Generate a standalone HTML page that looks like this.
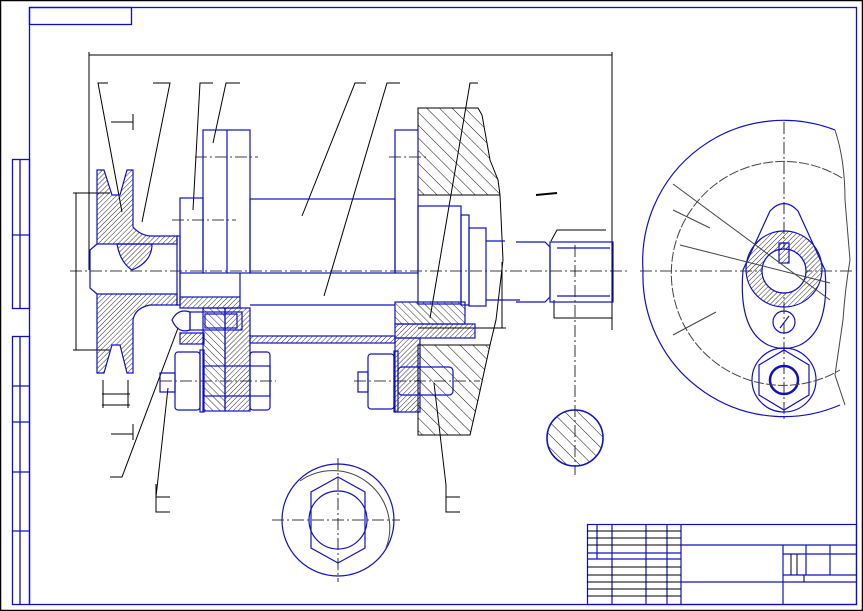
<!DOCTYPE html>
<html><head><meta charset="utf-8"><style>
html,body{margin:0;padding:0;background:#fff;}
svg{display:block}
</style></head><body>
<svg width="863" height="611" viewBox="0 0 863 611" xmlns="http://www.w3.org/2000/svg" fill="none" stroke-linecap="butt">
<defs>
<pattern id="h1" width="3.5" height="3.5" patternUnits="userSpaceOnUse" patternTransform="rotate(45)"><line x1="0" y1="0" x2="0" y2="4" stroke="#111" stroke-width="0.9"/></pattern>
<pattern id="h2" width="5" height="5" patternUnits="userSpaceOnUse" patternTransform="rotate(-45)"><line x1="0" y1="0" x2="0" y2="5" stroke="#111" stroke-width="0.9"/></pattern>
<pattern id="h3" width="9" height="9" patternUnits="userSpaceOnUse" patternTransform="rotate(-45)"><line x1="0" y1="0" x2="0" y2="9" stroke="#111" stroke-width="1"/></pattern>
</defs>
<rect x="0.5" y="0.5" width="862" height="610" stroke="#000" stroke-width="1.5"/>
<g stroke="#1010c0" stroke-width="1.3">
<rect x="29.5" y="7.5" width="827" height="597"/>
<rect x="29.5" y="7.5" width="102" height="17"/>
<rect x="12.5" y="159.5" width="17" height="149"/>
<line x1="20" y1="159" x2="20" y2="308"/>
<line x1="12" y1="235" x2="29" y2="235"/>
<rect x="12.5" y="336.5" width="17" height="268"/>
<line x1="20" y1="336" x2="20" y2="604"/>
<line x1="12" y1="386" x2="29" y2="386"/><line x1="12" y1="422" x2="29" y2="422"/><line x1="12" y1="472" x2="29" y2="472"/><line x1="12" y1="531" x2="29" y2="531"/>
</g>
<g stroke="#1010c0" stroke-width="1.2">
<rect x="587.5" y="524.5" width="269" height="80"/>
<line x1="681" y1="524" x2="681" y2="604"/>
<line x1="681" y1="545" x2="856" y2="545"/>
<line x1="681" y1="582" x2="856" y2="582"/>
<line x1="783" y1="545" x2="783" y2="604"/>
<line x1="783" y1="575" x2="856" y2="575"/>
<line x1="806" y1="545" x2="806" y2="575"/>
<line x1="830" y1="545" x2="830" y2="575"/>
<line x1="783" y1="554" x2="856" y2="554"/>
<line x1="597" y1="524" x2="597" y2="559"/>
<line x1="612" y1="524" x2="612" y2="604"/><line x1="646" y1="524" x2="646" y2="604"/><line x1="667" y1="524" x2="667" y2="604"/>
<line x1="587" y1="553" x2="681" y2="553"/><line x1="587" y1="559" x2="681" y2="559"/>
</g>
<g stroke="#000" stroke-width="1">
<line x1="587" y1="531" x2="681" y2="531"/><line x1="587" y1="538" x2="681" y2="538"/><line x1="587" y1="545" x2="681" y2="545"/>
<line x1="587" y1="567" x2="681" y2="567"/><line x1="587" y1="575" x2="681" y2="575"/><line x1="587" y1="582" x2="681" y2="582"/><line x1="587" y1="589" x2="681" y2="589"/><line x1="587" y1="596" x2="681" y2="596"/>
<line x1="791" y1="554" x2="791" y2="575"/><line x1="797" y1="554" x2="797" y2="575"/><line x1="804" y1="575" x2="804" y2="582"/>
</g>
<g stroke="#000" stroke-width="1">
<line x1="89" y1="55" x2="612" y2="55"/><line x1="89" y1="52" x2="89" y2="270"/><line x1="612" y1="52" x2="612" y2="330"/>
<polyline points="108,83 98,83 122,212"/><polyline points="153,83 170,83 142,222"/>
<polyline points="213,83 200,83 193,210"/><polyline points="240,83 226,83 213,143"/>
<polyline points="366,83 355,83 302,216"/><polyline points="400,83 387,83 324,296"/>
<polyline points="478,83 470,83 430,318"/>
<polyline points="110,477 122,477 178,328"/>
<polyline points="170,497 156,497 156,512 170,512"/><line x1="156" y1="484" x2="156" y2="497"/><line x1="156" y1="497" x2="168" y2="388"/>
<polyline points="460,497 446,497 446,512 460,512"/><line x1="446" y1="484" x2="446" y2="497"/><line x1="446" y1="485" x2="434" y2="383"/>
<line x1="76" y1="193" x2="76" y2="350"/><line x1="73" y1="193" x2="110" y2="193"/><line x1="73" y1="350" x2="110" y2="350"/>
<line x1="102" y1="394" x2="130" y2="394"/><line x1="102" y1="405" x2="130" y2="405"/>
<line x1="103" y1="380" x2="103" y2="408"/><line x1="128" y1="380" x2="128" y2="408"/>
<line x1="111" y1="122" x2="133" y2="122"/><line x1="133" y1="114" x2="133" y2="130"/>
<line x1="111" y1="434" x2="133" y2="434"/><line x1="133" y1="424" x2="133" y2="440"/>
<line x1="502" y1="262" x2="502" y2="328"/><line x1="418" y1="328" x2="506" y2="328"/>
<line x1="554" y1="318" x2="612" y2="318"/><line x1="554" y1="300" x2="554" y2="318"/>
<polyline points="551,241 557,230 606,230"/>
<line x1="536" y1="195" x2="557" y2="193" stroke-width="2"/>
</g>
<g stroke="#000" stroke-width="0.8" stroke-dasharray="12,3,2,3">
<line x1="70" y1="271" x2="630" y2="271"/>
<line x1="195" y1="157" x2="258" y2="157"/><line x1="389" y1="157" x2="428" y2="157"/>
<line x1="172" y1="220" x2="236" y2="220"/>
<line x1="160" y1="381" x2="276" y2="381"/><line x1="354" y1="381" x2="480" y2="381"/>
<line x1="575" y1="245" x2="575" y2="475"/>
<line x1="272" y1="520" x2="400" y2="520"/><line x1="338" y1="458" x2="338" y2="582"/>
<line x1="640" y1="271" x2="855" y2="271"/><line x1="784" y1="122" x2="784" y2="420"/>
</g>
<g stroke="#1010c0" stroke-width="1.2">
<path d="M97,170 L104,170 L112,195 L120,195 L127,170 L133,170 L133,227 Q140,235 150,236 L177,236 L177,244 L97,244 Z" fill="url(#h1)"/>
<path d="M97,294 L177,294 L177,305 L150,305 Q135,308 133,320 L133,373 L127,373 L120,345 L112,345 L104,373 L97,373 Z" fill="url(#h1)"/>
<path d="M117,244 L152,244 Q152,262 132,270 Q120,262 117,244 Z" fill="url(#h1)"/>
<rect x="180" y="297" width="60" height="11" fill="url(#h1)"/>
<rect x="180" y="333" width="24" height="11" fill="url(#h1)"/>
<rect x="203" y="308" width="22" height="103" fill="url(#h2)"/>
<rect x="225" y="308" width="25" height="103" fill="url(#h1)"/>
<rect x="250" y="336" width="145" height="7" fill="url(#h1)"/>
<rect x="395" y="302" width="70" height="22" fill="url(#h2)"/>
<rect x="395" y="324" width="80" height="14" fill="url(#h1)"/>
<rect x="395" y="338" width="25" height="74" fill="url(#h1)"/>
</g>
<g stroke="#000" stroke-width="1">
<path d="M418,108 L478,108 L482,115 L490,160 L498,180 L500,195 L418,195 Z" fill="url(#h3)"/>
<path d="M418,345 L490,345 L478,400 L470,435 L418,435 Z" fill="url(#h3)"/>
<path d="M500,195 L503,260 L496,320 L490,345" />
</g>
<g stroke="#1010c0" stroke-width="1.2">
<path d="M97,244 L90,250 L90,288 L97,294"/>
<rect x="177" y="236" width="3" height="69"/>
<rect x="180" y="198" width="23" height="75"/>
<rect x="203" y="130" width="47" height="143"/><line x1="227" y1="130" x2="227" y2="273"/>
<rect x="250" y="199" width="145" height="74"/>
<line x1="250" y1="305" x2="395" y2="305"/>
<path d="M180,297 L180,273 M240,297 L240,273"/>
<rect x="395" y="130" width="23" height="143"/>
<rect x="418" y="206" width="43" height="98"/>
<rect x="461" y="215" width="8" height="90"/>
<rect x="469" y="228" width="17" height="78"/>
<line x1="486" y1="241" x2="505" y2="241"/><line x1="486" y1="300" x2="520" y2="300"/>
<path d="M516,242 L545,242 L550,247 L550,297 L545,302 L516,302"/>
<rect x="550" y="242" width="63" height="60"/>
<line x1="557" y1="248" x2="610" y2="248"/><line x1="557" y1="296" x2="610" y2="296"/>
<path d="M172,320 Q178,308 190,312 L190,330 Q178,334 172,320 Z"/>
<rect x="190" y="312" width="52" height="18"/><rect x="205" y="314" width="32" height="14"/>
<path d="M160,373 L175,373 L175,392 L160,392 Z"/>
<rect x="175" y="352" width="25" height="58" rx="3"/>
<rect x="200" y="350" width="4" height="62"/>
<rect x="204" y="366" width="66" height="30"/>
<rect x="250" y="352" width="20" height="58" rx="3"/>
<path d="M358,372 L368,372 L368,392 L358,392 Z"/>
<rect x="368" y="354" width="26" height="55" rx="3"/>
<rect x="394" y="351" width="4" height="61"/>
<rect x="398" y="367" width="55" height="28" rx="4"/>
<circle cx="338" cy="520" r="56"/>
<path d="M338,477 L365,492 L365,548 L338,563 L311,548 L311,492 Z"/>
<circle cx="338" cy="520" r="29"/>
<circle cx="575" cy="438" r="28" stroke-width="1.6" fill="url(#h3)"/>
<path d="M835,130 A141,141 0 0,0 643,271 A141,141 0 0,0 840,405"/>
<path d="M770,211 Q784,196 798,211 L825,270 Q830,330 800,345 Q784,352 768,345 Q738,330 743,270 Z"/>
<circle cx="784" cy="269" r="38" fill="url(#h1)"/>
<circle cx="784" cy="271" r="22" fill="#fff"/>
<rect x="779" y="243" width="10" height="20" fill="url(#h1)"/>
<circle cx="784" cy="322" r="11"/>
<line x1="780" y1="328" x2="789" y2="316"/>
<circle cx="784" cy="380" r="32"/>
<path d="M784,350 L809,365 L809,395 L784,410 L759,395 L759,365 Z"/>
<circle cx="784" cy="380" r="14" stroke-width="2.5"/>
</g>
<g stroke="#444" stroke-width="1">
<path d="M842,178 A112,112 0 1,0 840,370" stroke-dasharray="10,2"/>
<path d="M835,130 Q845,160 845,200 L850,260 Q845,290 843,320 L835,375 L845,405"/>
<line x1="673" y1="184" x2="830" y2="300"/><line x1="680" y1="245" x2="830" y2="283"/>
<line x1="673" y1="210" x2="710" y2="228"/><line x1="673" y1="335" x2="716" y2="312"/>
<path d="M300,481 A57,57 0 0,1 386,548"/>
</g>
</svg>
</body></html>
